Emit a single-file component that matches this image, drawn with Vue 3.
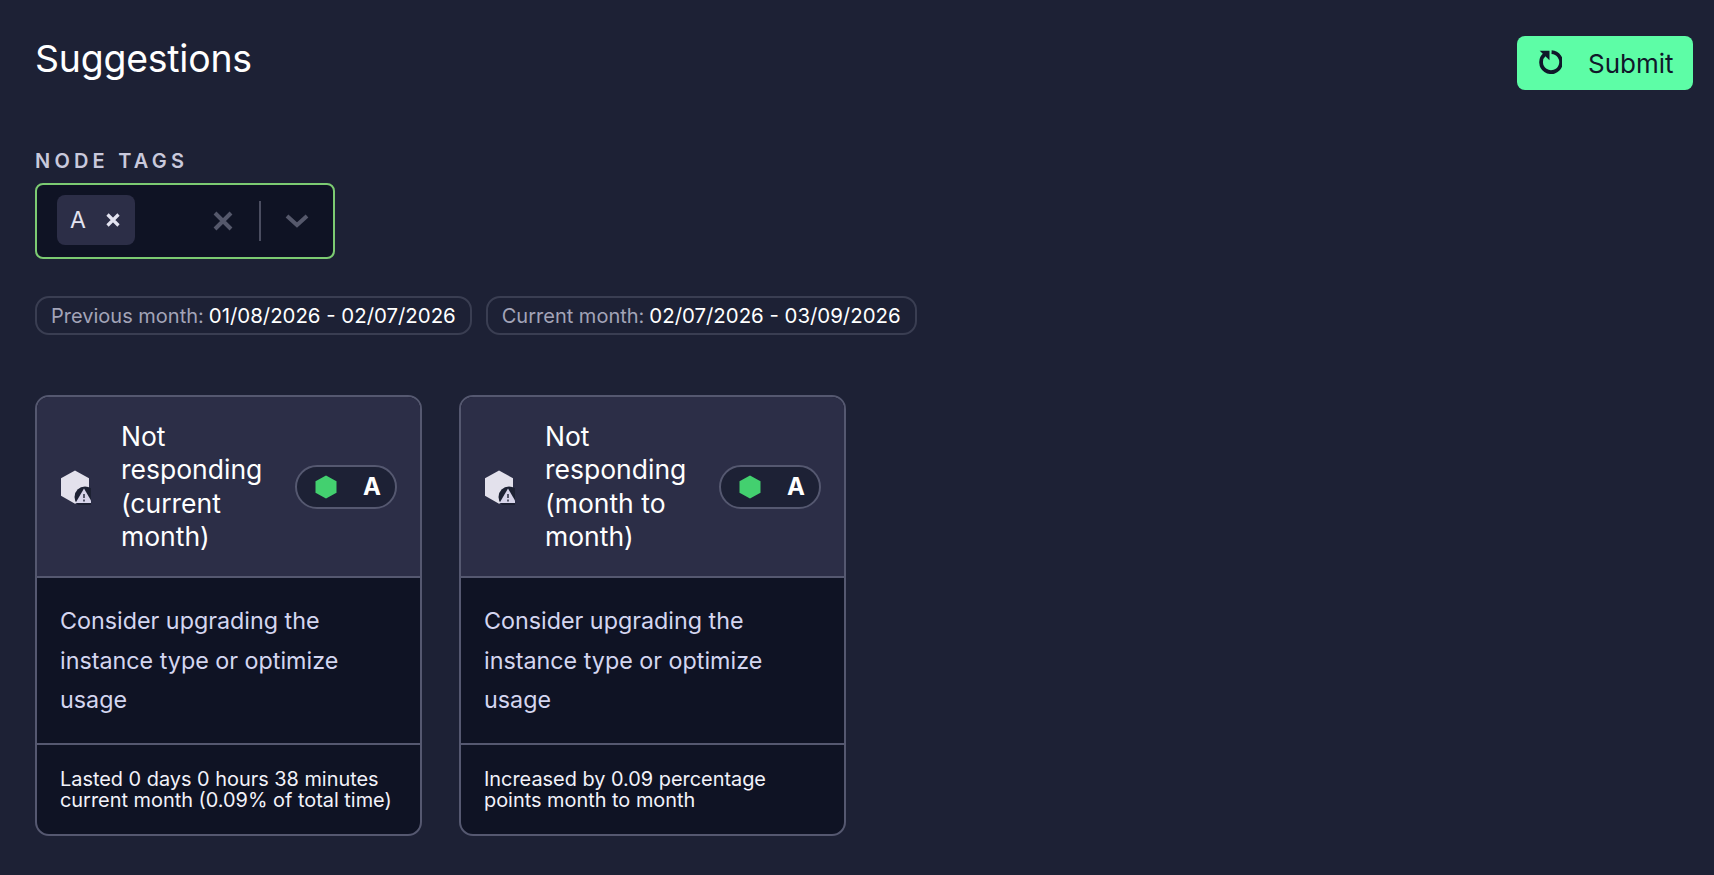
<script setup>
const cards = [
  { title: 'Not responding (current month)', foot: 'Lasted 0 days 0 hours 38 minutes current month (0.09% of total time)' },
  { title: 'Not responding (month to month)', foot: 'Increased by 0.09 percentage points month to month' }
]
</script>

<template>
  <div class="page">
    <div class="top">
      <h1 class="title">Suggestions</h1>
      <button class="submit">
        <svg class="refresh" viewBox="0 0 24 24" width="25" height="25" fill="none" stroke="#10182a" stroke-width="3.6">
          <path d="M7.4 5.2A9.6 9.6 0 1 0 14 3" />
          <path d="M2.6 1.6h9.4v9.2z" fill="#10182a" stroke="none" />
        </svg>
        <span>Submit</span>
      </button>
    </div>

    <div class="label">NODE TAGS</div>
    <div class="select">
      <div class="tag">
        <span class="tag-a">A</span>
        <svg viewBox="0 0 14 14" width="14" height="14" stroke="#e3e3f0" stroke-width="3.2" fill="none"><path d="M1.5 1.5l11 11M12.5 1.5l-11 11" /></svg>
      </div>
      <svg class="clear" viewBox="0 0 20 20" width="20" height="20" stroke="#55586b" stroke-width="4" fill="none"><path d="M2 2l16 16M18 2L2 18" /></svg>
      <span class="sep"></span>
      <svg class="chev" viewBox="0 0 24 14" width="24" height="14" stroke="#55586b" stroke-width="4" fill="none"><path d="M2 2l10 9 10-9" /></svg>
    </div>

    <div class="periods">
      <div class="pill"><span class="muted">Previous month:</span><span class="value">01/08/2026 - 02/07/2026</span></div>
      <div class="pill"><span class="muted">Current month:</span><span class="value">02/07/2026 - 03/09/2026</span></div>
    </div>

    <div class="cards">
      <div v-for="c in cards" :key="c.title" class="card">
        <div class="head">
          <svg class="node" viewBox="0 0 32 36" width="32" height="36">
            <path d="M16 1.5 30 9.2v12l-7 10.5-7 3-14-8V9.2z" fill="#e3e1ec" />
            <circle cx="26" cy="28" r="10.5" fill="#1d2133" />
            <path d="M26 19.5 34.5 34h-17z" fill="#d7d4ea" transform="translate(-1 0)" />
            <path d="M25 25v4M25 30.5v2" stroke="#1d2133" stroke-width="1.4" />
          </svg>
          <div class="card-title">{{ c.title }}</div>
          <div class="badge">
            <svg viewBox="0 0 22 24" width="22" height="24"><path d="M11 0.5 21.5 6.2v11.6L11 23.5.5 17.8V6.2z" fill="#43d06f" /></svg>
            <span>A</span>
          </div>
        </div>
        <div class="body">Consider upgrading the instance type or optimize usage</div>
        <div class="foot">{{ c.foot }}</div>
      </div>
    </div>
  </div>
</template>

<style>
html, body { margin: 0; background: #1d2135; }
</style>

<style scoped>
.page {
  height: 875px;
  box-sizing: border-box;
  padding: 36px 21px 0 35px;
  background: #1d2135;
  font-family: "Inter", "Noto Sans", sans-serif;
  color: #fff;
  overflow: hidden;
}
.top { display: flex; justify-content: space-between; align-items: flex-start; height: 110px; }
.title { margin: 0; font-size: 37.4px; font-weight: 400; line-height: 48px; margin-top: -1px; letter-spacing: -0.2px; }
.submit {
  width: 176px; height: 54px; border: 0; border-radius: 8px; background: #5dfda6;
  display: flex; align-items: center; gap: 26px; padding: 0 0 0 20px; box-sizing: border-box;
  color: #10182a; font: 400 26px "Inter", sans-serif;
}
.refresh { flex: none; margin-bottom: 4px; }
.label { font-size: 20px; font-weight: 600; letter-spacing: 4.2px; color: #c9c9dc; line-height: 24px; margin-top: 3px; }
.select {
  width: 300px; height: 76px; margin-top: 10px; box-sizing: border-box; border: 2px solid #7ccb72; border-radius: 8px;
  background: #0f1324; display: flex; align-items: center; padding-left: 20px;
}
.tag {
  width: 78px; height: 50px; margin-top: -2px; border-radius: 8px; background: #2c2e47; display: flex; align-items: center;
  gap: 20px; padding-left: 13px; box-sizing: border-box; color: #e3e3f0; font-size: 23px;
}
.clear { margin-left: 78px; }
.sep { width: 2px; height: 40px; background: #4a4d60; margin-left: 26px; }
.chev { margin-left: 24px; }
.periods { display: flex; gap: 14px; margin-top: 37px; }
.pill {
  height: 39px; box-sizing: border-box; border: 2px solid #3a3e52; border-radius: 14px; padding: 0 14px;
  display: flex; align-items: center; font-size: 20px; color: #fff; white-space: pre;
}
.muted { color: #a3a4b8; }
.value { font-size: 20.4px; margin-left: 5px; }
.cards { display: flex; gap: 37px; margin-top: 60px; }
.card {
  width: 387px; height: 441px; box-sizing: border-box; border: 2px solid #555870; border-radius: 14px;
  display: flex; flex-direction: column; overflow: hidden; background: #0f1324;
}
.head {
  height: 181px; flex: none; background: #2c2e47; display: flex; align-items: center; padding: 0 23px 0 23px;
  box-sizing: border-box; border-bottom: 2px solid #555870;
}
.node { flex: none; margin-left: -1px; }
.card-title { width: 153px; margin-left: 30px; font-size: 26.5px; line-height: 33.5px; color: #fff; flex: none; }
.badge {
  margin-left: auto; width: 102px; height: 44px; box-sizing: border-box; border: 2px solid #555870; border-radius: 22px;
  background: #1d2135; display: flex; align-items: center; justify-content: space-between; padding: 0 14px 0 18px;
  font-size: 24px; font-weight: 700;
}
.body {
  height: 167px; flex: none; box-sizing: border-box; padding: 23px 20px 0 23px; font-size: 23.3px; line-height: 39.5px;
  color: #d4d6f0; border-bottom: 2px solid #555870;
}
.foot { padding: 24px 24px 0 23px; font-size: 19.9px; line-height: 21px; color: #f2f2fa; }
</style>
